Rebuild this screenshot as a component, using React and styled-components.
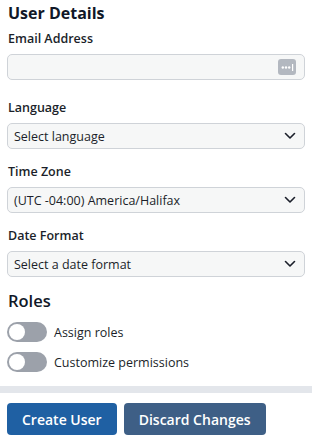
import React from 'react';
import styled, { createGlobalStyle } from 'styled-components';

const GlobalStyle = createGlobalStyle`
  body {
    margin: 0;
    background: #ffffff;
    font-family: "Open Sans", "Noto Sans", sans-serif;
    color: #1b1f2a;
  }
`;

const Page = styled.div`
  width: 312px;
  height: 444px;
  display: flex;
  flex-direction: column;
  overflow: hidden;
`;

const Form = styled.div`
  padding: 1px 7px 0 7px;
  display: flex;
  flex-direction: column;
`;

const Heading = styled.h2`
  margin: ${({ top }) => top || '0'} 0 0 1px;
  font-size: ${({ light }) => (light ? '16.5px' : '16px')};
  line-height: 24px;
  font-weight: ${({ light }) => (light ? 600 : 700)};
  color: #111827;
`;

const Label = styled.label`
  display: block;
  margin: ${({ top }) => top || '14px'} 0 6px 1px;
  font-size: 12.5px;
  line-height: 18px;
  font-weight: 600;
  color: #1b1f2a;
`;

const Field = styled.div`
  display: flex;
  align-items: center;
  height: 26px;
  box-sizing: border-box;
  border: 1px solid #cfd3d8;
  border-radius: 5px;
  background: #f6f7f7;
  padding: 0 8px 0 6px;
`;

const FieldText = styled.span`
  flex: 1;
  font-size: 12.5px;
  color: #1b1f2a;
  white-space: nowrap;
`;

const KeyIcon = styled.span`
  width: 18px;
  height: 16px;
  border-radius: 3px;
  background: #b3b8c0;
  display: flex;
  align-items: center;
  justify-content: center;
`;

const Roles = styled.div`
  margin-top: 9px;
  display: flex;
  flex-direction: column;
  gap: 10px;
`;

const ToggleRow = styled.div`
  display: flex;
  align-items: center;
  gap: 7px;
`;

const Track = styled.span`
  width: 40px;
  height: 20px;
  border-radius: 10px;
  background: #9ca1aa;
  display: flex;
  align-items: center;
  padding: 0 2px;
  box-sizing: border-box;
`;

const Knob = styled.span`
  width: 16px;
  height: 16px;
  border-radius: 50%;
  background: #ffffff;
`;

const ToggleText = styled.span`
  font-size: 12.5px;
  color: #1b1f2a;
`;

const Divider = styled.div`
  margin-top: 14px;
  height: 7px;
  background: #e3e6eb;
`;

const Actions = styled.div`
  display: flex;
  gap: 7px;
  padding: 10px 7px 0;
`;

const Button = styled.button`
  height: 32px;
  padding: 0 15px;
  border: none;
  border-radius: 4px;
  background: ${({ secondary }) => (secondary ? '#3e5f86' : '#1f60a3')};
  color: #ffffff;
  font-family: "Open Sans", "Noto Sans", sans-serif;
  font-size: 14px;
  font-weight: 600;
`;

const Chevron = () => (
  <svg width="12" height="8" viewBox="0 0 12 8">
    <path d="M1.5 1.5 L6 6 L10.5 1.5" fill="none" stroke="#1b1f2a" strokeWidth="1.6" strokeLinecap="round" strokeLinejoin="round" />
  </svg>
);

const SelectField = ({ value }) => (
  <Field>
    <FieldText>{value}</FieldText>
    <Chevron />
  </Field>
);

const Toggle = ({ label }) => (
  <ToggleRow>
    <Track>
      <Knob />
    </Track>
    <ToggleText>{label}</ToggleText>
  </ToggleRow>
);

export default function App() {
  return (
    <Page>
      <GlobalStyle />
      <Form>
        <Heading>User Details</Heading>
        <Label top="5px">Email Address</Label>
        <Field>
          <FieldText />
          <KeyIcon>
            <svg width="13" height="7" viewBox="0 0 13 7">
              <circle cx="1.8" cy="3.5" r="1.2" fill="#fff" />
              <circle cx="5" cy="3.5" r="1.2" fill="#fff" />
              <circle cx="8.2" cy="3.5" r="1.2" fill="#fff" />
              <rect x="11" y="0" width="1.2" height="7" fill="#fff" />
            </svg>
          </KeyIcon>
        </Field>
        <Label top="19px">Language</Label>
        <SelectField value="Select language" />
        <Label>Time Zone</Label>
        <SelectField value="(UTC -04:00) America/Halifax" />
        <Label>Date Format</Label>
        <SelectField value="Select a date format" />
        <Heading light top="12px">Roles</Heading>
        <Roles>
          <Toggle label="Assign roles" />
          <Toggle label="Customize permissions" />
        </Roles>
      </Form>
      <Divider />
      <Actions>
        <Button>Create User</Button>
        <Button secondary>Discard Changes</Button>
      </Actions>
    </Page>
  );
}
